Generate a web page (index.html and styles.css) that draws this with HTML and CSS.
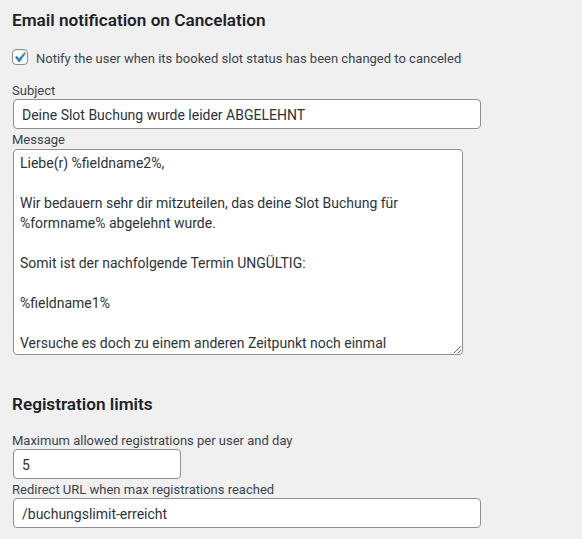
FILE: index.html
```html
<!DOCTYPE html>
<html lang="de">
<head>
<meta charset="utf-8">
<title>Settings</title>
<link rel="stylesheet" href="styles.css">
</head>
<body>
<section class="section">
  <h2 class="section-title">Email notification on Cancelation</h2>
  <label class="check-row">
    <span class="checkbox">
      <svg class="check-icon" viewBox="0 0 20 20" width="21" height="21" aria-hidden="true"><path d="M14.83 4.89l1.34.94-5.81 8.38H9.02L5.78 9.670l1.34-1.25 2.57 2.4z"/></svg>
    </span>
    <span class="check-text">Notify the user when its booked slot status has been changed to canceled</span>
  </label>
  <div class="field field-first">
    <label class="field-label" for="subject">Subject</label>
    <input class="text-input wide" id="subject" type="text" value="Deine Slot Buchung wurde leider ABGELEHNT">
  </div>
  <div class="field">
    <label class="field-label" for="message">Message</label>
    <textarea class="text-area" id="message">Liebe(r) %fieldname2%,

Wir bedauern sehr dir mitzuteilen, das deine Slot Buchung für %formname% abgelehnt wurde.

Somit ist der nachfolgende Termin UNGÜLTIG:

%fieldname1%

Versuche es doch zu einem anderen Zeitpunkt noch einmal</textarea>
  </div>
</section>
<section class="section section-second">
  <h2 class="section-title">Registration limits</h2>
  <div class="field field-first field-first-2">
    <label class="field-label" for="max">Maximum allowed registrations per user and day</label>
    <input class="text-input small" id="max" type="text" value="5">
  </div>
  <div class="field">
    <label class="field-label" for="redirect">Redirect URL when max registrations reached</label>
    <input class="text-input wide" id="redirect" type="text" value="/buchungslimit-erreicht">
  </div>
</section>
</body>
</html>
```
FILE: styles.css
```css
html, body {
  margin: 0;
  background: #f0f0f1;
}
body {
  padding: 8px 12px 0;
  font-family: Roboto, "Liberation Sans", sans-serif;
  font-size: 13px;
  color: #3c434a;
}
.section-title {
  margin: 0;
  font-size: 17.16px;
  line-height: 24px;
  font-weight: 600;
  color: #1d2327;
}
.section-second {
  margin-top: 37px;
}
.check-row {
  display: flex;
  align-items: flex-start;
  gap: 8px;
  margin-top: 15px;
  height: 20px;
}
.checkbox {
  position: relative;
  box-sizing: border-box;
  width: 16px;
  height: 16px;
  margin-top: 2px;
  border: 1px solid #8c8f94;
  border-radius: 4px;
  background: #fff;
  box-shadow: inset 0 1px 2px rgba(0,0,0,0.1);
  flex: none;
}
.check-icon {
  position: absolute;
  left: -4px;
  top: -3px;
  fill: #3582c4;
}
.check-text {
  line-height: 20px;
  padding-top: 2px;
}
.field {
  margin-top: 3px;
}
.field-first {
  margin-top: 16px;
}
.field-first-2 {
  margin-top: 17px;
}
.field-label {
  display: block;
  line-height: 16px;
}
.text-input {
  display: block;
  box-sizing: border-box;
  height: 30px;
  margin: 0 1px;
  padding: 2px 8px 0;
  border: 1px solid #8c8f94;
  border-radius: 4px;
  background: #fff;
  font-family: Roboto, "Liberation Sans", sans-serif;
  font-size: 14px;
  color: #2c3338;
  outline: none;
}
.wide { width: 468px; }
.small { width: 168px; }
.text-area {
  display: block;
  box-sizing: border-box;
  width: 450px;
  height: 206px;
  margin: 1px 1px 0;
  padding: 3px 6px 2px;
  border: 1px solid #8c8f94;
  border-radius: 4px;
  background: #fff;
  font-family: Roboto, "Liberation Sans", sans-serif;
  font-size: 14px;
  line-height: 20px;
  color: #2c3338;
  overflow: hidden;
  resize: both;
  outline: none;
}
```
